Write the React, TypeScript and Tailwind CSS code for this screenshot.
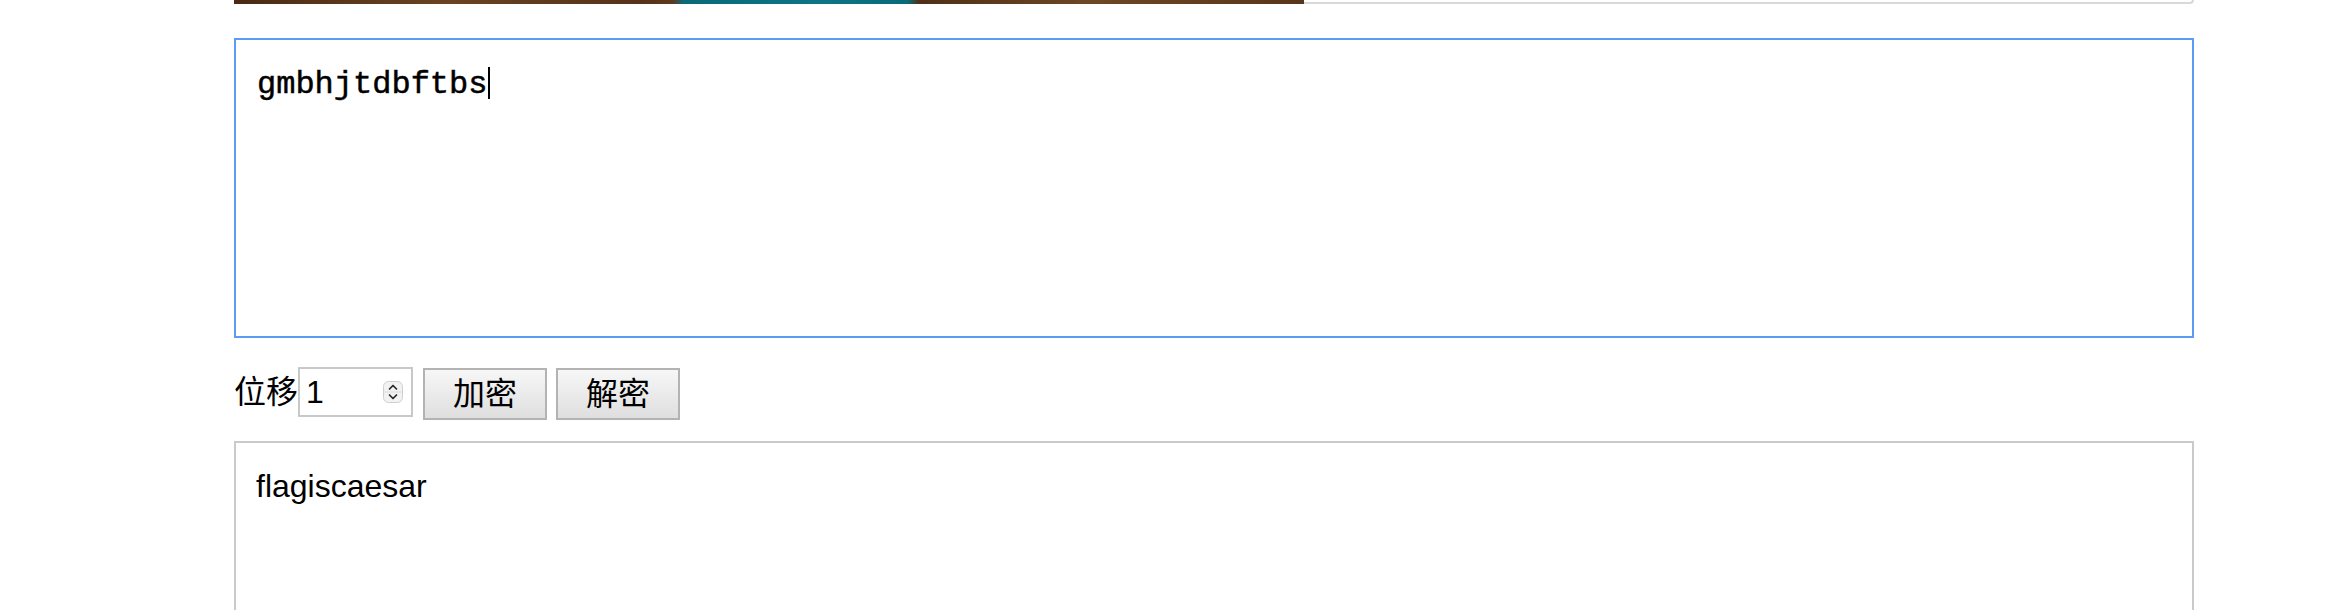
function Spinner() {
  return (
    <svg width="20" height="22" viewBox="0 0 20 22" className="shrink-0">
      <rect x="0.5" y="0.5" width="19" height="21" rx="5" fill="#f2f2f2" stroke="#cfcfcf" />
      <line x1="1" y1="11" x2="19" y2="11" stroke="#dedede" />
      <path d="M6.5 8 L10 4.5 L13.5 8" fill="none" stroke="#2a2a2a" strokeWidth="1.7" strokeLinecap="round" strokeLinejoin="round" />
      <path d="M6.5 14 L10 17.5 L13.5 14" fill="none" stroke="#2a2a2a" strokeWidth="1.7" strokeLinecap="round" strokeLinejoin="round" />
    </svg>
  );
}

function Button({ label }: { label: string }) {
  return (
    <button
      type="button"
      className="mt-[1px] flex h-[52px] w-[124px] items-center justify-center border-2 border-[#b3b3b3] bg-gradient-to-b from-[#f7f7f7] to-[#dfdfdf] text-[32px] leading-none text-black"
    >
      {label}
    </button>
  );
}

export default function App() {
  return (
    <div className="h-[610px] overflow-hidden bg-white font-['Liberation_Sans','Noto_Sans_CJK_SC',sans-serif] text-black">
      <div className="ml-[234px] w-[1960px]">
        <div className="flex h-[4px]">
          <div className="h-[4px] w-[1070px] bg-[linear-gradient(90deg,#4a2a14_0%,#6b4322_20%,#553219_38%,#5d3a1c_41%,#0a6a78_42%,#0d7584_55%,#0a6a78_63%,#4f2f16_64%,#6e4724_80%,#5a3519_100%)]" />
          <div className="h-[4px] flex-1 rounded-br-[8px] border-r-2 border-b-2 border-[#d9d9d9]" />
        </div>

        <div className="mt-[34px] h-[300px] border-2 border-[#5a9bf7] px-[21px] pt-[21px] font-['Liberation_Mono',monospace] text-[32px] leading-[36px] [-webkit-text-stroke:0.5px_#000]">
          gmbhjtdbftbs
          <span className="ml-[1px] inline-block h-[32px] w-[2px] translate-y-[6px] bg-black" />
        </div>

        <div className="mt-[29px] flex items-start">
          <span className="text-[32px] leading-[50px]">位移</span>
          <div className="flex h-[50px] w-[115px] items-center border-2 border-[#c8c8c8] pl-[6px] pr-[8px]">
            <span className="flex-1 text-[32px] leading-none">1</span>
            <Spinner />
          </div>
          <div className="ml-[10px] flex gap-[9px]">
            <Button label="加密" />
            <Button label="解密" />
          </div>
        </div>

        <div className="mt-[21px] h-[172px] border-2 border-[#cacaca] px-[20px] pt-[25px] text-[32px] leading-[36px]">
          flagiscaesar
        </div>
      </div>
    </div>
  );
}
